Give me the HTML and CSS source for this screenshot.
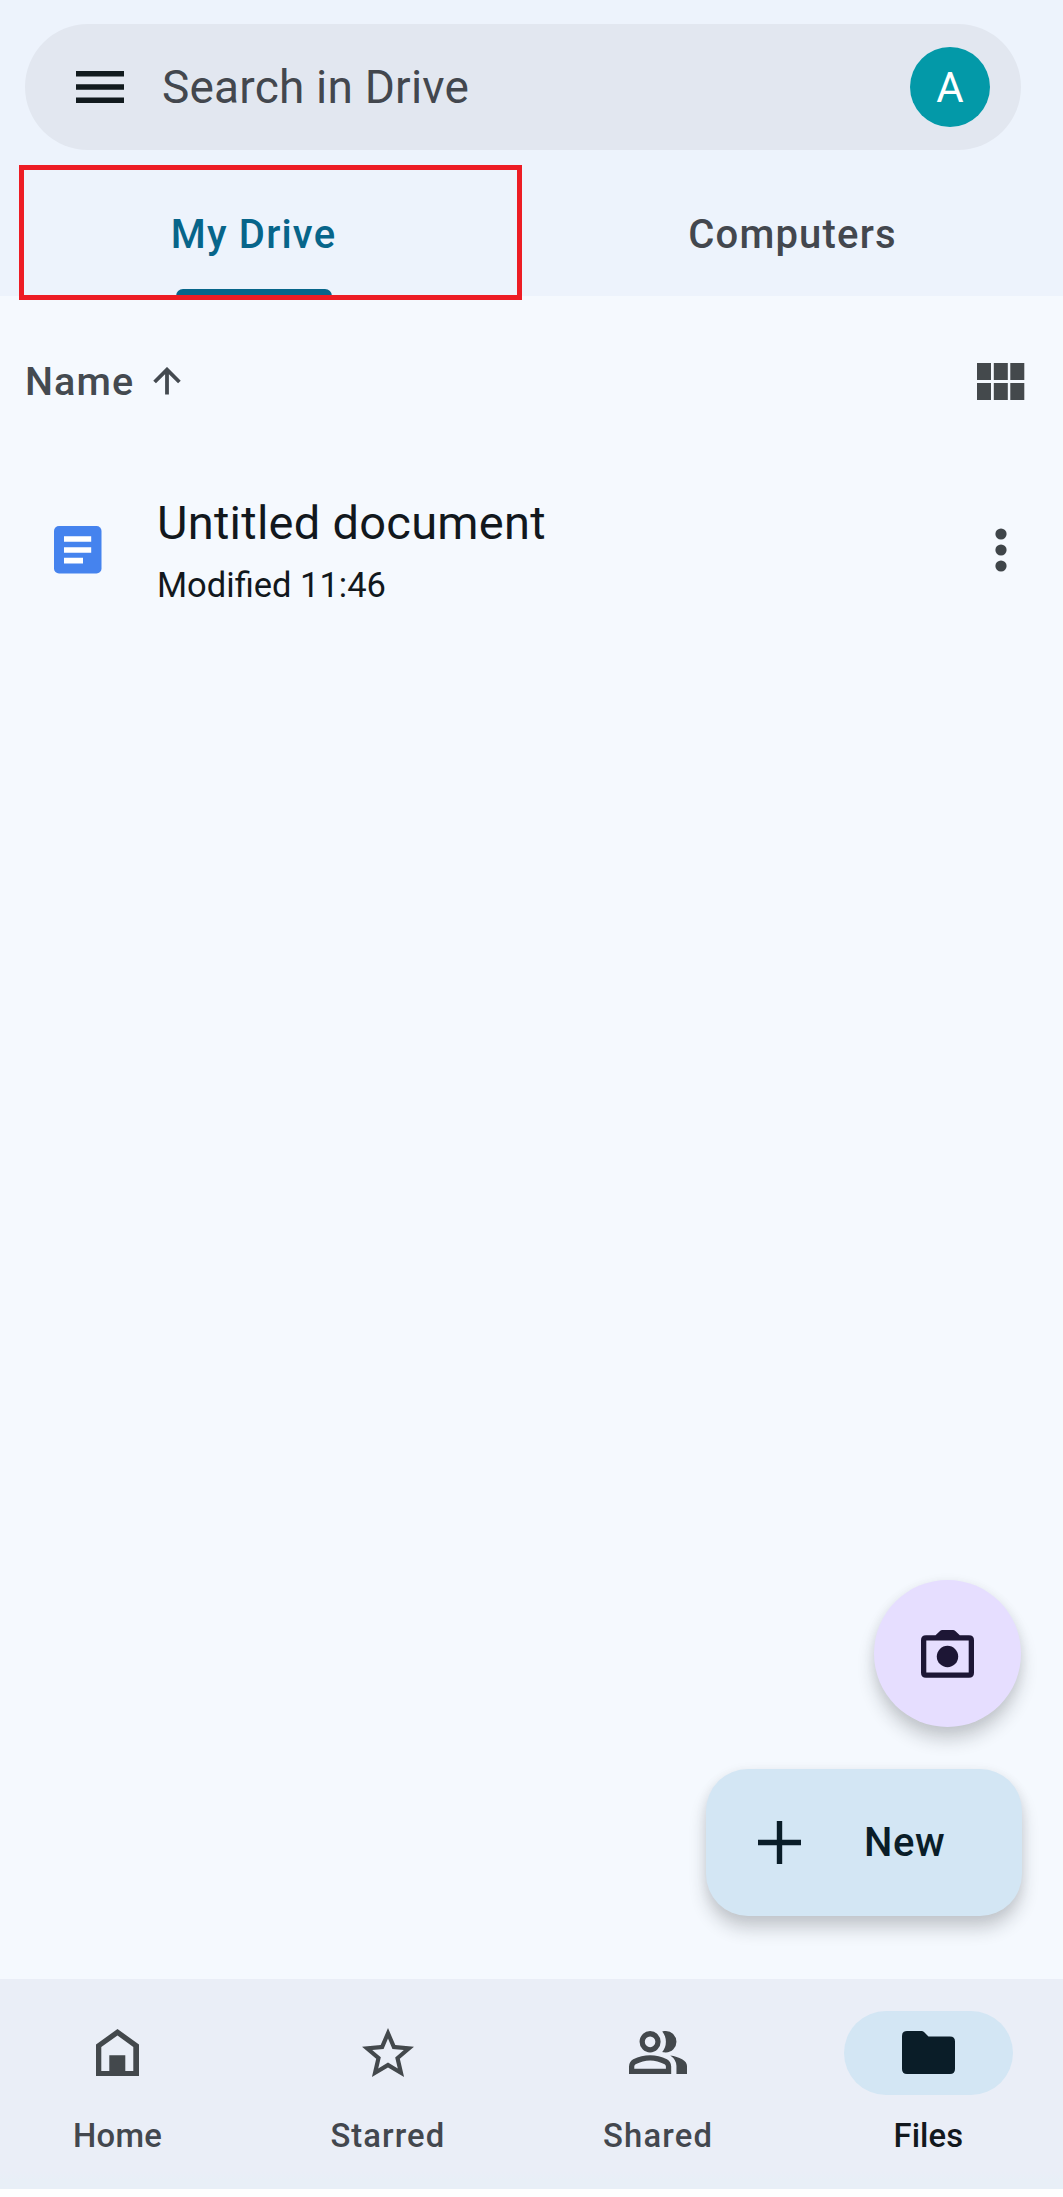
FILE: index.html
```
<!DOCTYPE html>
<html lang="en">
<head>
<meta charset="utf-8">
<title>My Drive</title>
<link rel="stylesheet" href="styles.css">
</head>
<body>
<div class="app">
  <header class="header">
    <div class="search">
      <svg class="menu" width="48" height="32" viewBox="0 0 48 32"><path d="M0 0h48v5.4H0zM0 13.3h48v5.4H0zM0 26.6h48V32H0z"/></svg>
      <span class="placeholder">Search in Drive</span>
      <span class="avatar">A</span>
    </div>
    <nav class="tabs">
      <div class="tab tab-active">My Drive<span class="indicator"></span></div>
      <div class="tab">Computers</div>
    </nav>
    <div class="highlight"></div>
  </header>

  <main class="content">
    <div class="sort">
      <span class="sort-label">Name</span>
      <svg width="28" height="28" viewBox="0 0 28 28" fill="none" stroke="#444a50" stroke-width="3.8"><path d="M14 27.5V3M1.6 15 14 2.6 26.4 15"/></svg>
      <svg class="grid-icon" width="48" height="37" viewBox="0 0 48 37"><path d="M0 0h14v17H0zM16.8 0h14v17h-14zM33.3 0h14v17h-14zM0 20h14v17H0zM16.8 20h14v17h-14zM33.3 20h14v17h-14z"/></svg>
    </div>
    <div class="file">
      <svg width="48" height="48" viewBox="0 0 48 48"><rect width="47.5" height="47.5" rx="5" fill="#4583ee"/><path d="M10 10.2h27.2v5.6H10zM10 21.2h27.2v5.6H10zM10 31.8h19v5.6H10z" fill="#fff"/></svg>
      <div class="file-text">
        <div class="file-name">Untitled document</div>
        <div class="file-date">Modified 11:46</div>
      </div>
      <svg class="more" width="12" height="44" viewBox="0 0 12 44"><circle cx="6" cy="6" r="5.6"/><circle cx="6" cy="22" r="5.6"/><circle cx="6" cy="38" r="5.6"/></svg>
    </div>
    <div class="fabs">
      <div class="fab-scan">
        <svg width="54" height="48" viewBox="0 0 54 48" fill="#1d1635"><path fill-rule="evenodd" d="M5 5.3H14.5L19 .9Q20 0 21.3 0H32Q33.3 0 34.3 .9L38.8 5.3H48Q53 5.3 53 10.3V42.7Q53 47.7 48 47.7H5Q0 47.7 0 42.7V10.3Q0 5.3 5 5.3ZM5.3 10.6V42.4H47.7V10.6Z"/><circle cx="26.5" cy="26.5" r="10.7"/></svg>
      </div>
      <div class="fab-new">
        <svg width="43" height="43" viewBox="0 0 43 43"><path d="M18.8 0h5.4v18.8H43v5.4H24.2V43h-5.4V24.2H0v-5.4h18.8z" fill="#0a1d28"/></svg>
        <span>New</span>
      </div>
    </div>
  </main>

  <footer class="bottom-nav">
    <div class="nav-item">
      <span class="pill"><svg width="43" height="47" viewBox="0 0 43 47"><path fill-rule="evenodd" d="M21.5 0 43 15.5V47H0V15.5ZM5.3 18V42H13.3V26.2H29.3V42H37.3V18L21.5 6.5Z"/></svg></span>
      <span class="label label-home">Home</span>
    </div>
    <div class="nav-item">
      <span class="pill"><svg width="52" height="49" viewBox="2 2 20 19" preserveAspectRatio="none"><path d="M22 9.24l-7.19-.62L12 2 9.19 8.63 2 9.24l5.46 4.73L5.82 21 12 17.27 18.18 21l-1.63-7.03L22 9.24zM12 15.4l-3.76 2.27 1-4.28-3.32-2.88 4.38-.38L12 6.1l1.71 4.04 4.38.38-3.32 2.88 1 4.28L12 15.4z"/></svg></span>
      <span class="label">Starred</span>
    </div>
    <div class="nav-item">
      <span class="pill"><svg width="58" height="43" viewBox="1 4 22 16" preserveAspectRatio="none"><path d="M1 20v-2.8q0-.85.438-1.563.437-.712 1.162-1.087 1.55-.775 3.15-1.163Q7.35 13 9 13t3.25.387q1.6.388 3.15 1.163.725.375 1.163 1.087Q17 16.35 17 17.2V20Zm18 0v-3q0-1.1-.612-2.113-.613-1.012-1.738-1.737 1.275.15 2.4.512 1.125.363 2.1.888.9.5 1.375 1.112Q23 16.475 23 17v3ZM9 12q-1.65 0-2.825-1.175Q5 9.65 5 8t1.175-2.825Q7.35 4 9 4t2.825 1.175Q13 6.35 13 8t-1.175 2.825Q10.65 12 9 12Zm10-4q0 1.65-1.175 2.825Q16.65 12 15 12q-.275 0-.7-.062-.425-.063-.7-.138.675-.8 1.037-1.775Q15 9.05 15 8q0-1.05-.363-2.025-.362-.975-1.037-1.775.35-.125.7-.163Q14.65 4 15 4q1.65 0 2.825 1.175Q19 6.35 19 8ZM3 18h12v-.8q0-.275-.137-.5-.138-.225-.363-.35-1.35-.675-2.725-1.013Q10.4 15 9 15t-2.775.337Q4.85 15.675 3.5 16.35q-.225.125-.362.35Q3 16.925 3 17.2Zm6-8q.825 0 1.413-.588Q11 8.825 11 8t-.587-1.412Q9.825 6 9 6q-.825 0-1.412.588Q7 7.175 7 8t.588 1.412Q8.175 10 9 10Z"/></svg></span>
      <span class="label label-shared">Shared</span>
    </div>
    <div class="nav-item nav-active">
      <span class="pill"><svg width="53" height="43" viewBox="0 0 53 43"><path d="M5 0H19.5Q21 0 22 1L26.5 5.5H48Q53 5.5 53 10.5V38Q53 43 48 43H5Q0 43 0 38V5Q0 0 5 0Z"/></svg></span>
      <span class="label label-files">Files</span>
    </div>
  </footer>
</div>
</body>
</html>
```
FILE: styles.css
```
* { box-sizing: border-box; }

body {
  margin: 0;
  background: #fdfefe;
  font-family: Roboto, "Noto Sans", sans-serif;
  color: #12181d;
}

svg { display: block; flex: none; }

.app {
  display: flex;
  flex-direction: column;
  width: 1063px;
  height: 2197px;
  padding-bottom: 8px;
  overflow: hidden;
}

.header {
  position: relative;
  flex: none;
  height: 296px;
  padding-top: 24px;
  background: #edf3fc;
}

.search {
  display: flex;
  align-items: center;
  height: 126px;
  margin: 0 42px 0 25px;
  padding: 0 31px 0 51px;
  border-radius: 63px;
  background: #e2e7f0;
}

.menu { fill: #111a1e; }

.placeholder {
  flex: 1;
  margin-left: 38px;
  padding-bottom: 1px;
  font-size: 46px;
  line-height: 54px;
  letter-spacing: 0.2px;
  color: #43474e;
}

.avatar {
  width: 80px;
  height: 80px;
  border-radius: 50%;
  background: #0399a8;
  color: #fff;
  font-size: 42px;
  line-height: 81px;
  text-align: center;
}

.tabs {
  display: flex;
  width: 1078px;
  height: 146px;
  margin-left: -16px;
}

.tab {
  flex: 1;
  display: flex;
  flex-direction: column;
  align-items: center;
  padding-top: 61px;
  font-size: 40px;
  font-weight: 500;
  line-height: 48px;
  letter-spacing: 1.2px;
  color: #43474e;
}

.tab-active { color: #07658a; }

.indicator {
  width: 156px;
  height: 7px;
  margin-top: auto;
  border-radius: 7px 7px 0 0;
  background: #07658a;
}

/* Callout frame around the active tab */
.highlight {
  position: absolute;
  left: 19px;
  top: 165px;
  width: 503px;
  height: 135px;
  border: 5px solid #ed1c24;
}

.content {
  flex: 1;
  display: flex;
  flex-direction: column;
  padding: 61px 38px 63px 25px;
  background: #f5f9fe;
}

.sort {
  display: flex;
  align-items: center;
  height: 48px;
  color: #444a50;
}

.sort-label {
  width: 128px;
  padding-top: 1px;
  font-size: 39.5px;
  font-weight: 500;
  line-height: 48px;
  letter-spacing: 1.1px;
}

.grid-icon { margin-left: auto; fill: #44494c; }

.file {
  display: flex;
  align-items: center;
  height: 124px;
  margin-top: 83px;
  padding: 0 18px 0 29px;
}

.file-text { flex: 1; margin: 8px 0 0 55px; }

.file-name {
  font-size: 47px;
  line-height: 62px;
  letter-spacing: 0.26px;
}

.file-date {
  font-size: 34.5px;
  line-height: 62px;
}

.more { fill: #3f4549; }

.fabs {
  display: flex;
  flex-direction: column;
  align-items: flex-end;
  gap: 42px;
  margin: auto 3px 0 0;
}

.fab-scan,
.fab-new {
  display: flex;
  align-items: center;
  height: 147px;
  box-shadow: 0 13px 17px rgba(30, 35, 40, 0.2), 0 2px 12px rgba(30, 35, 40, 0.07);
}

.fab-scan {
  justify-content: center;
  width: 147px;
  margin-right: 1px;
  border-radius: 50%;
  background: #e6deff;
}

.fab-new {
  width: 316px;
  padding-left: 52px;
  border-radius: 42px;
  background: #d3e6f4;
  color: #0a1d28;
  font-size: 40px;
  font-weight: 500;
  letter-spacing: 0.6px;
}

.fab-new span { margin-left: 63px; }

.bottom-nav {
  display: flex;
  flex: none;
  width: 1081px;
  height: 210px;
  margin-left: -17.5px;
  padding-top: 32px;
  background: linear-gradient(#eaeef7 0 92%, #e8eff7 96%);
}

.nav-item {
  flex: 1;
  display: flex;
  flex-direction: column;
  align-items: center;
  gap: 21px;
  color: #43474e;
  fill: #43484c;
}

.pill {
  display: flex;
  align-items: center;
  justify-content: center;
  width: 169px;
  height: 84px;
  padding-bottom: 2px;
  border-radius: 42px;
}

.label {
  font-size: 32.8px;
  font-weight: 500;
  line-height: 40px;
  letter-spacing: 1.07px;
}

.label-home { letter-spacing: 0.3px; }
.label-shared { letter-spacing: 1.2px; }
.label-files { letter-spacing: 0.1px; }

.nav-active { color: #12181d; fill: #0a1d28; }
.nav-active .pill { background: #d3e6f4; }
```
